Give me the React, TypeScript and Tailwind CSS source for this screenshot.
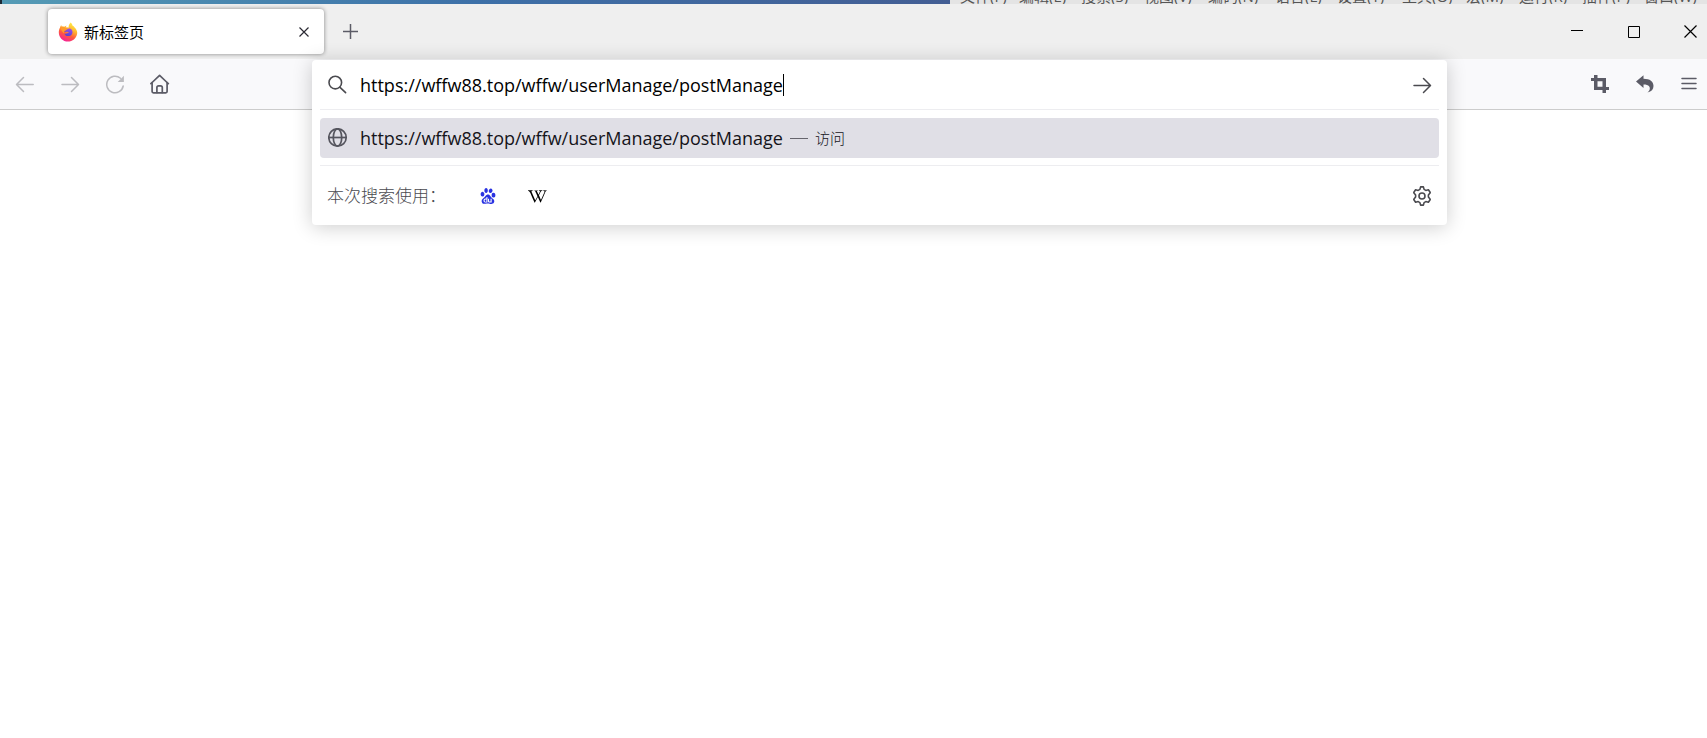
import React from "react";
import { FaWikipediaW } from "react-icons/fa";
import { SiBaidu } from "react-icons/si";

const menus: { label: string; cell: string }[] = [
  { label: "文件(F)", cell: "w-[59px]" },
  { label: "编辑(E)", cell: "w-[62px]" },
  { label: "搜索(S)", cell: "w-[63px]" },
  { label: "视图(V)", cell: "w-[64px]" },
  { label: "编码(N)", cell: "w-[67px]" },
  { label: "语言(L)", cell: "w-[62px]" },
  { label: "设置(T)", cell: "w-[65px]" },
  { label: "工具(O)", cell: "w-[64px]" },
  { label: "宏(M)", cell: "w-[53px]" },
  { label: "运行(R)", cell: "w-[63px]" },
  { label: "插件(P)", cell: "w-[62px]" },
  { label: "窗口(W)", cell: "w-[64px]" },
];

function FirefoxLogo() {
  return (
    <svg width="20" height="20" viewBox="0 0 20 20" aria-hidden="true">
      <defs>
        <linearGradient id="fx-body" x1="0.8" y1="0.05" x2="0.35" y2="1">
          <stop offset="0" stopColor="#fff04a" />
          <stop offset="0.35" stopColor="#ffb42e" />
          <stop offset="0.65" stopColor="#ff5a3c" />
          <stop offset="1" stopColor="#f5209a" />
        </linearGradient>
        <linearGradient id="fx-globe" x1="0.8" y1="0" x2="0.3" y2="1">
          <stop offset="0" stopColor="#a44be8" />
          <stop offset="1" stopColor="#4b43d6" />
        </linearGradient>
      </defs>
      <path
        d="M12.6.4c1.2 1 1.8 2.2 2 3.3 1 .3 1.6 1 2 1.7.8.7 1.3 1.3 1.6 2C19.2 9 19.4 10.6 19.1 12c-.8 4.4-4.6 7.6-9.1 7.6C4.9 19.6.8 15.5.8 10.5c0-1.900.5-3.600 1.300-5 .1-.8.500-1.700 1.200-2.500 0 .7.200 1.200.4 1.500.8-.2 1.800-.1 2.600.3.7-.6 1.700-1 2.600-1-.7.500-1.100 1.100-1.200 1.700h3C10.300 4.100 11.200 1.800 12.600.4z"
        fill="url(#fx-body)"
      />
      <path
        d="M6 9.200c1.300-.2 2.200-.7 2.800-1.600.8-.5 1.900-1.300 3-1.200 1.900.5 2.900 2.200 2.700 4-.3 2.300-2.200 3.800-4.400 3.700-1.800-.1-3.300-1.100-3.700-2.700 1 .5 2.100.5 3-.1.600-.4 1-.6 1.500-.6-.6-1-1.600-1.200-2.600-.9-.9.200-1.700.1-2.300-.6z"
        fill="url(#fx-globe)"
      />
      <path
        d="M2.300 5.500c1.300-.8 2.800-.9 4-.1 1 .1 2 .2 3.400.3 0 1-.9 1.500-1.900 1.900-.2.700-1 1.100-1.800 1.600-.2 1-.1 1.700.4 2.300C4.800 11 3.300 8 2.300 5.500z"
        fill="#ff9a2b"
      />
    </svg>
  );
}

function ArrowRight() {
  return (
    <svg width="20" height="20" viewBox="0 0 20 20" fill="none" stroke="currentColor" strokeWidth="1.5" strokeLinecap="round" strokeLinejoin="round" aria-hidden="true">
      <path d="M2 10.500h16M11.500 3.500l7 7-7 7" />
    </svg>
  );
}

function ArrowLeft() {
  return (
    <svg width="20" height="20" viewBox="0 0 20 20" fill="none" stroke="currentColor" strokeWidth="1.5" strokeLinecap="round" strokeLinejoin="round" aria-hidden="true">
      <path d="M18.200 10.500h-16M8.500 3.500l-7 7 7 7" />
    </svg>
  );
}

function Reload() {
  return (
    <svg width="20" height="20" viewBox="0 0 20 20" fill="none" stroke="currentColor" strokeWidth="1.5" strokeLinecap="round" aria-hidden="true">
      <path d="M18.200 12A8.300 8.300 0 1 1 15.500 4.200" />
      <path d="M18.900 1.700v6.200h-6.200z" fill="currentColor" stroke="none" />
    </svg>
  );
}

function Home() {
  return (
    <svg width="20" height="20" viewBox="0 0 20 20" fill="none" stroke="currentColor" strokeWidth="1.7" strokeLinecap="round" strokeLinejoin="round" aria-hidden="true">
      <path d="M.9 9.700l1.200-1.200L9.600 1.300l7.500 7.200 1.200 1.200" />
      <path d="M2.100 8.700v8.800c0 .8.600 1.300 1.300 1.300h12.400c.7 0 1.300-.5 1.300-1.300V8.700" />
      <path d="M6.900 18.500v-5c0-1 .7-1.700 1.700-1.700h2c1 0 1.700.7 1.700 1.700v5" />
    </svg>
  );
}

function Search() {
  return (
    <svg width="20" height="20" viewBox="0 0 20 20" fill="none" stroke="currentColor" strokeWidth="1.6" strokeLinecap="round" aria-hidden="true">
      <circle cx="7.300" cy="7.600" r="6.300" />
      <path d="M12 12.300l5.600 5.400" />
    </svg>
  );
}

function Globe() {
  return (
    <svg width="20" height="20" viewBox="0 0 20 20" fill="none" stroke="currentColor" strokeWidth="1.700" aria-hidden="true">
      <circle cx="9.500" cy="9.500" r="8.700" />
      <ellipse cx="9.500" cy="9.500" rx="4.200" ry="8.700" />
      <path d="M.8 9.500h17.400" />
    </svg>
  );
}

function Gear() {
  return (
    <svg width="20" height="20" viewBox="0 0 20 20" fill="none" stroke="currentColor" strokeWidth="1.6" strokeLinejoin="round" aria-hidden="true">
      <circle cx="10" cy="10" r="3" />
      <path d="M8.600.9h2.800l.7 2.500 1.700 1 2.600-.7 1.700 2.500c.2.400.1.700-.1.900L16.400 9v2l1.600 1.900c.2.300.3.600.1.900l-1.700 2.500-2.600-.7-1.700 1-.7 2.500H8.600l-.7-2.500-1.700-1-2.600.7-1.700-2.500c-.2-.3-.1-.6.100-.9L3.600 11V9L2 7.100c-.2-.2-.3-.5-.1-.9l1.700-2.500 2.600.7 1.700-1z" />
    </svg>
  );
}

function Crop() {
  return (
    <svg width="18" height="18" viewBox="0 0 18 18" fill="currentColor" aria-hidden="true">
      <path d="M3 0h3.500v3H15v9h3v3h-3v3h-3.500v-3H3V6H0V3h3zM6.500 6.300v5.400h5V6.300z" fillRule="evenodd" />
    </svg>
  );
}

function Undo() {
  return (
    <svg width="18" height="18" viewBox="0 0 18 18" fill="currentColor" aria-hidden="true">
      <path d="M0 6.500L7.500.2v3.600C14 3.800 17.500 6.600 17.500 11c0 3.400-2 5.600-6 6.600 2.500-2.200 3-4.300 1.600-6.300-1-1.400-2.800-1.900-5.600-1.900v3.700z" />
    </svg>
  );
}

export default function App() {
  return (
    <div className="min-h-screen bg-white font-['Open_Sans','Noto_Sans_CJK_SC',sans-serif] text-black">
      <div className="flex h-1 overflow-hidden">
        <div className="w-[950px] shrink-0 border-l-2 border-[#1d2a36] bg-linear-to-r from-[#559bb5] via-[#3d70a8] to-[#435e94]" />
        <nav className="flex min-w-0 flex-1 items-end overflow-hidden bg-[#e4e4e4] pl-[10px] text-[15px] leading-4 text-[#555]">
          {menus.map((m) => (
            <span key={m.label} className={`${m.cell} shrink-0 whitespace-nowrap`}>
              {m.label}
            </span>
          ))}
        </nav>
      </div>

      <header>
        <div className="flex h-[55px] items-center bg-[#efefef] pl-12">
          <div className="flex h-[45px] w-[276px] items-center rounded-[4px] bg-white pr-2 pl-[10px] shadow-[0_0_4px_rgba(0,0,0,0.45)]">
            <FirefoxLogo />
            <span className="ml-[6px] flex-1 text-[15px] leading-5">新标签页</span>
            <button aria-label="关闭标签页" className="flex size-6 items-center justify-center text-[#2b2a33]">
              <svg width="10" height="10" viewBox="0 0 10 10" stroke="currentColor" strokeWidth="1.2" aria-hidden="true">
                <path d="M.5.500l9 9M9.500.500l-9 9" />
              </svg>
            </button>
          </div>
          <button aria-label="打开新标签页" className="ml-3 flex size-7 items-center justify-center text-[#5b5b66]">
            <svg width="16" height="16" viewBox="0 0 16 16" stroke="currentColor" strokeWidth="1.5" aria-hidden="true">
              <path d="M8.500 0v15M1 7.500h15" />
            </svg>
          </button>
          <div className="ml-auto flex items-center">
            <button aria-label="最小化" className="flex h-10 w-[57px] items-center justify-center">
              <svg width="12" height="12" viewBox="0 0 12 12" aria-hidden="true">
                <path d="M0 4h12v1H0z" />
              </svg>
            </button>
            <button aria-label="最大化" className="flex h-10 w-[57px] items-center justify-center">
              <svg width="12" height="12" viewBox="0 0 12 12" fill="none" stroke="currentColor" aria-hidden="true">
                <path d="M.5.500h11v11H.5z" />
              </svg>
            </button>
            <button aria-label="关闭" className="flex h-10 w-[45px] items-center justify-end pr-[10px]">
              <svg width="13" height="13" viewBox="0 0 13 13" stroke="currentColor" strokeWidth="1.2" aria-hidden="true">
                <path d="M.5.500l12 12M12.500.500l-12 12" />
              </svg>
            </button>
          </div>
        </div>

        <div className="flex h-[51px] items-start border-b border-[#cccccc] bg-[#f9f9fb]">
          <div className="flex h-[50px] w-[312px] shrink-0 items-center gap-[25px] pl-[15px]">
            <button aria-label="后退" disabled className="text-[#bcbcc0]"><ArrowLeft /></button>
            <button aria-label="前进" disabled className="text-[#bcbcc0]"><ArrowRight /></button>
            <button aria-label="刷新" disabled className="text-[#bcbcc0]"><Reload /></button>
            <button aria-label="主页" className="text-[#5b5b66]"><Home /></button>
          </div>

          <div className="relative z-10 mt-px min-w-0 flex-1 rounded-[4px] bg-white px-2 shadow-[0_2px_20px_rgba(0,0,0,0.2)]">
            <div className="flex h-[50px] items-center border-b border-[#ededf0] pr-[7px] pl-2 text-[#4a4a4f]">
              <Search />
              <div className="ml-3 flex min-w-0 flex-1 items-center">
                <input
                  aria-label="搜索或输入网址"
                  defaultValue="https://wffw88.top/wffw/userManage/postManage"
                  className="field-sizing-content bg-transparent p-0 text-[18px] leading-6 text-black outline-none"
                />
                <span className="h-[22px] w-px bg-black" />
              </div>
              <button aria-label="前往" className="text-[#4a4a4f]"><ArrowRight /></button>
            </div>
            <a href="#visit" className="mt-2 flex h-10 items-center rounded-[4px] bg-[#e0dfe6] px-2 text-[#15141a]">
              <span className="text-[#55555e]"><Globe /></span>
              <span className="ml-3 text-[18px] leading-6">https://wffw88.top/wffw/userManage/postManage</span>
              <span className="ml-[7px] h-px w-[18px] bg-[#66656d]" />
              <span className="ml-[7px] text-[15px] leading-5 font-light">访问</span>
            </a>
            <div className="mt-[7px] flex h-[60px] items-center border-t border-[#ededf0] px-[7px] pt-px">
              <span className="w-[153px] text-[17px] leading-6 font-light text-[#4a4a4f]">本次搜索使用：</span>
              <button aria-label="百度" className="text-[16px] text-[#2932e1]"><SiBaidu /></button>
              <button aria-label="维基百科" className="ml-8 text-[19px] text-black"><FaWikipediaW /></button>
              <button aria-label="更改搜索设置" className="ml-auto text-[#4a4a4f]"><Gear /></button>
            </div>
          </div>

          <div className="flex h-[50px] w-[260px] shrink-0 items-center justify-end gap-[27px] pr-[10px] text-[#5b5b66]">
            <button aria-label="截图"><Crop /></button>
            <button aria-label="撤销"><Undo /></button>
            <button aria-label="打开应用程序菜单">
              <svg width="16" height="14" viewBox="0 0 16 14" stroke="currentColor" strokeWidth="1.5" strokeLinecap="round" aria-hidden="true">
                <path d="M1 1.500h14M1 6.500h14M1 11.500h14" />
              </svg>
            </button>
          </div>
        </div>
      </header>
    </div>
  );
}
